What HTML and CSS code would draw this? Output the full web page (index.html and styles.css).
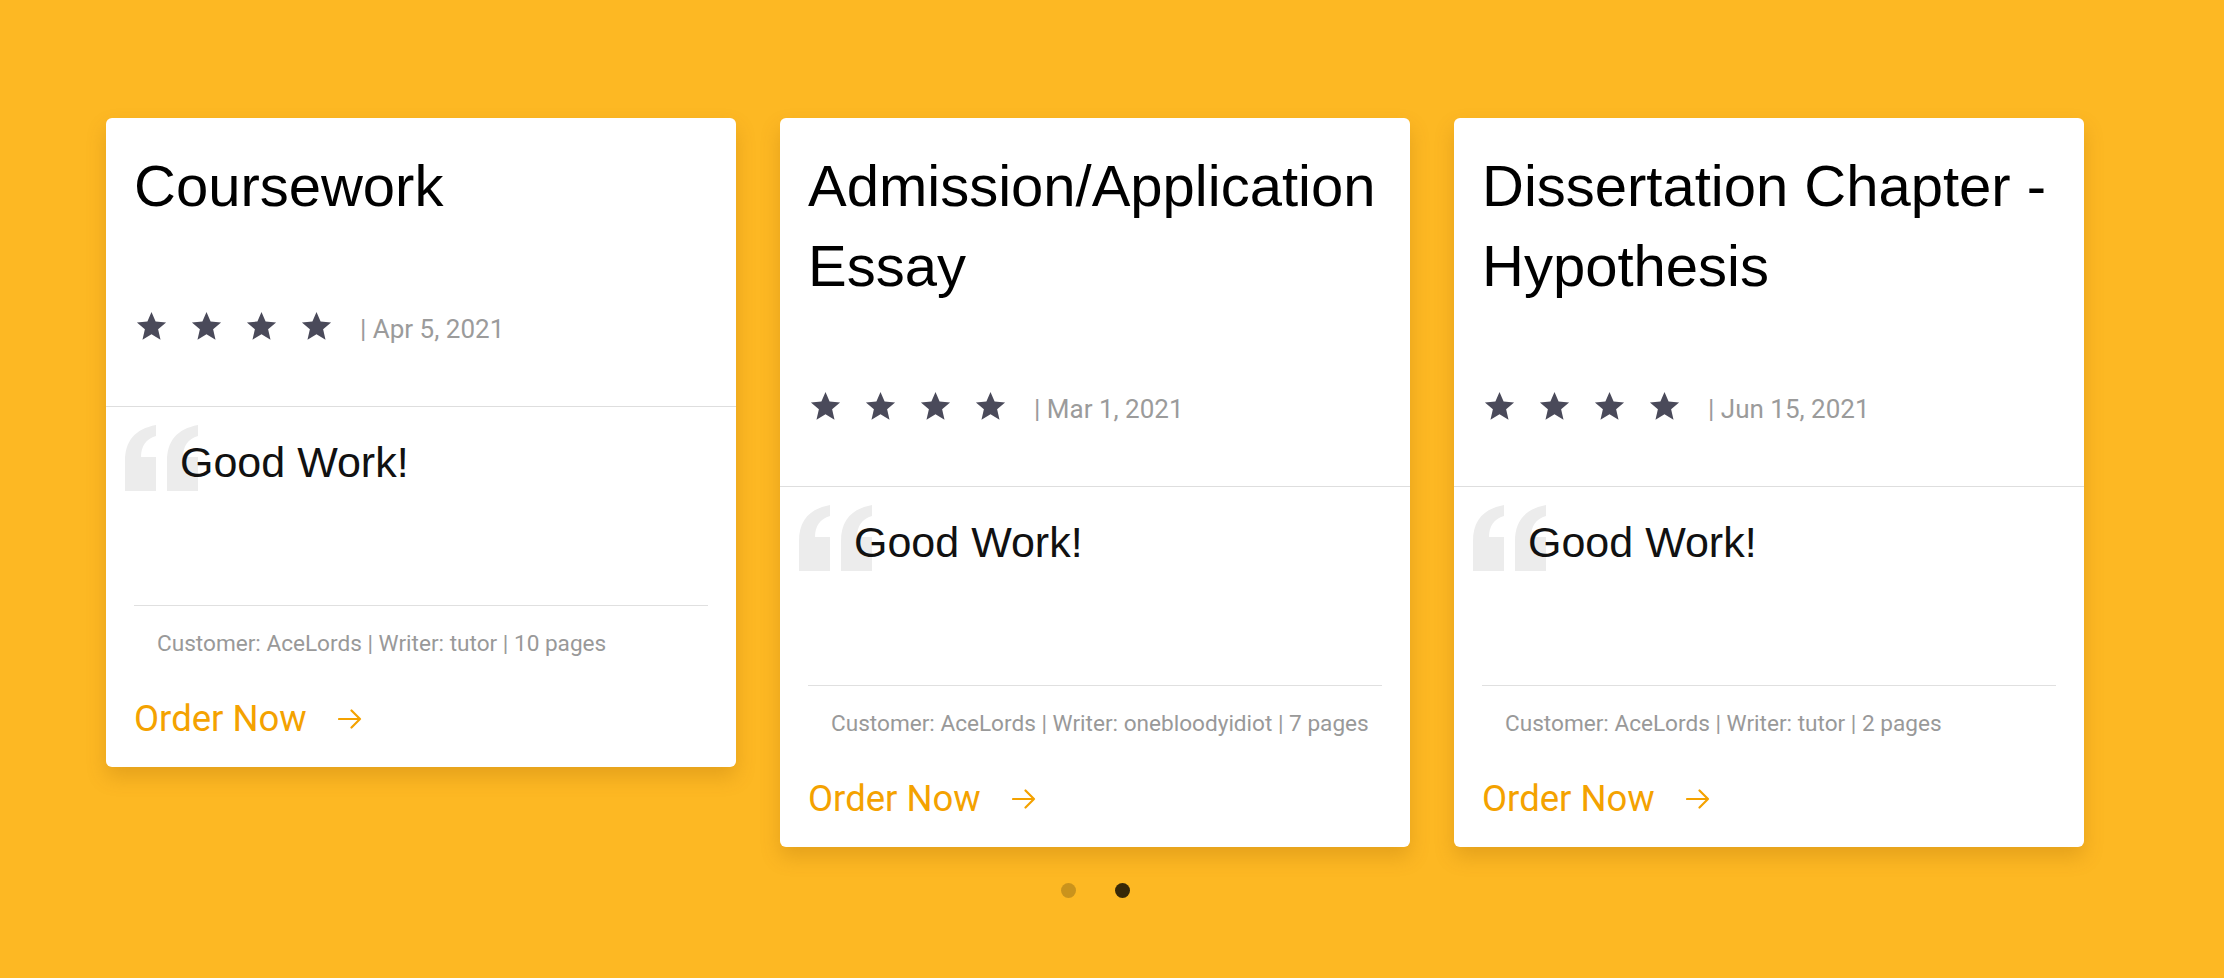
FILE: index.html
```html
<!DOCTYPE html>
<html lang="en">
<head>
<meta charset="utf-8">
<title>Reviews</title>
<link rel="stylesheet" href="styles.css">
</head>
<body>
<div class="page">
  <div class="slider">
    <div class="track">
      <article class="card">
        <div class="card-head">
          <h2 class="title">Coursework</h2>
          <div class="rating">
            <svg class="star" viewBox="0 0 24 24"><path d="M12 17.27L18.18 21l-1.64-7.03L22 9.24l-7.19-.61L12 2 9.19 8.63 2 9.24l5.46 4.73L5.82 21z"/></svg>
            <svg class="star" viewBox="0 0 24 24"><path d="M12 17.27L18.18 21l-1.64-7.03L22 9.24l-7.19-.61L12 2 9.19 8.63 2 9.24l5.46 4.73L5.82 21z"/></svg>
            <svg class="star" viewBox="0 0 24 24"><path d="M12 17.27L18.18 21l-1.64-7.03L22 9.24l-7.19-.61L12 2 9.19 8.63 2 9.24l5.46 4.73L5.82 21z"/></svg>
            <svg class="star" viewBox="0 0 24 24"><path d="M12 17.27L18.18 21l-1.64-7.03L22 9.24l-7.19-.61L12 2 9.19 8.63 2 9.24l5.46 4.73L5.82 21z"/></svg>
            <span class="date">| Apr 5, 2021</span>
          </div>
        </div>
        <div class="card-body">
          <div class="quote">
            <svg class="qmark" viewBox="0 0 74 66"><path d="M0 66V36C0 16 10 4 31 0v11c-10 3-15 10-15 21h15v34z"/><path d="M42 66V36C42 16 52 4 73 0v11c-10 3-15 10-15 21h15v34z"/></svg>
            <p class="quote-text">Good Work!</p>
          </div>
          <div class="meta">Customer: AceLords | Writer: tutor | 10 pages</div>
          <a class="order" href="#">Order Now <svg class="arrow" viewBox="0 0 24 20"><path d="M1 10h21M13.5 1.5L22 10l-8.5 8.5"/></svg></a>
        </div>
      </article>

      <article class="card">
        <div class="card-head">
          <h2 class="title">Admission/Application Essay</h2>
          <div class="rating">
            <svg class="star" viewBox="0 0 24 24"><path d="M12 17.27L18.18 21l-1.64-7.03L22 9.24l-7.19-.61L12 2 9.19 8.63 2 9.24l5.46 4.73L5.82 21z"/></svg>
            <svg class="star" viewBox="0 0 24 24"><path d="M12 17.27L18.18 21l-1.64-7.03L22 9.24l-7.19-.61L12 2 9.19 8.63 2 9.24l5.46 4.73L5.82 21z"/></svg>
            <svg class="star" viewBox="0 0 24 24"><path d="M12 17.27L18.18 21l-1.64-7.03L22 9.24l-7.19-.61L12 2 9.19 8.63 2 9.24l5.46 4.73L5.82 21z"/></svg>
            <svg class="star" viewBox="0 0 24 24"><path d="M12 17.27L18.18 21l-1.64-7.03L22 9.24l-7.19-.61L12 2 9.19 8.63 2 9.24l5.46 4.73L5.82 21z"/></svg>
            <span class="date">| Mar 1, 2021</span>
          </div>
        </div>
        <div class="card-body">
          <div class="quote">
            <svg class="qmark" viewBox="0 0 74 66"><path d="M0 66V36C0 16 10 4 31 0v11c-10 3-15 10-15 21h15v34z"/><path d="M42 66V36C42 16 52 4 73 0v11c-10 3-15 10-15 21h15v34z"/></svg>
            <p class="quote-text">Good Work!</p>
          </div>
          <div class="meta">Customer: AceLords | Writer: onebloodyidiot | 7 pages</div>
          <a class="order" href="#">Order Now <svg class="arrow" viewBox="0 0 24 20"><path d="M1 10h21M13.5 1.5L22 10l-8.5 8.5"/></svg></a>
        </div>
      </article>

      <article class="card">
        <div class="card-head">
          <h2 class="title">Dissertation Chapter - Hypothesis</h2>
          <div class="rating">
            <svg class="star" viewBox="0 0 24 24"><path d="M12 17.27L18.18 21l-1.64-7.03L22 9.24l-7.19-.61L12 2 9.19 8.63 2 9.24l5.46 4.73L5.82 21z"/></svg>
            <svg class="star" viewBox="0 0 24 24"><path d="M12 17.27L18.18 21l-1.64-7.03L22 9.24l-7.19-.61L12 2 9.19 8.63 2 9.24l5.46 4.73L5.82 21z"/></svg>
            <svg class="star" viewBox="0 0 24 24"><path d="M12 17.27L18.18 21l-1.64-7.03L22 9.24l-7.19-.61L12 2 9.19 8.63 2 9.24l5.46 4.73L5.82 21z"/></svg>
            <svg class="star" viewBox="0 0 24 24"><path d="M12 17.27L18.18 21l-1.64-7.03L22 9.24l-7.19-.61L12 2 9.19 8.63 2 9.24l5.46 4.73L5.82 21z"/></svg>
            <span class="date">| Jun 15, 2021</span>
          </div>
        </div>
        <div class="card-body">
          <div class="quote">
            <svg class="qmark" viewBox="0 0 74 66"><path d="M0 66V36C0 16 10 4 31 0v11c-10 3-15 10-15 21h15v34z"/><path d="M42 66V36C42 16 52 4 73 0v11c-10 3-15 10-15 21h15v34z"/></svg>
            <p class="quote-text">Good Work!</p>
          </div>
          <div class="meta">Customer: AceLords | Writer: tutor | 2 pages</div>
          <a class="order" href="#">Order Now <svg class="arrow" viewBox="0 0 24 20"><path d="M1 10h21M13.5 1.5L22 10l-8.5 8.5"/></svg></a>
        </div>
      </article>
    </div>
    <div class="dots">
      <span class="dot"></span>
      <span class="dot dot-active"></span>
    </div>
  </div>
</div>
</body>
</html>
```

FILE: styles.css
```css
html, body {
  margin: 0;
  padding: 0;
}

body {
  background: #fdb823;
  font-family: "Liberation Sans", Arial, sans-serif;
}

.page {
  height: 978px;
  box-sizing: border-box;
  padding: 118px 0 0 106px;
  overflow: hidden;
}

.slider {
  width: 1978px;
}

.track {
  display: flex;
  align-items: flex-start;
  gap: 44px;
}

.card {
  width: 630px;
  flex: 0 0 630px;
  background: #ffffff;
  border-radius: 6px;
  box-shadow: 0 10px 20px rgba(140, 80, 0, 0.22);
}

.card-head {
  padding: 28px 28px 60px;
  border-bottom: 1px solid #dedede;
}

.title {
  margin: 0 0 80px;
  font-family: "Liberation Sans", Arial, sans-serif;
  font-weight: 400;
  font-size: 58px;
  line-height: 80px;
  color: #000000;
}

.rating {
  display: flex;
  align-items: center;
  gap: 20px;
  height: 40px;
}

.star {
  width: 35px;
  height: 35px;
  fill: #4a4a5a;
  flex: none;
}

.date {
  margin-left: 6px;
  padding-top: 5px;
  font-family: Roboto, "Liberation Sans", sans-serif;
  font-size: 26px;
  color: #9b9b9b;
}

.card-body {
  padding: 0 28px 26px;
}

.quote {
  position: relative;
  height: 198px;
  box-sizing: border-box;
  padding: 29px 0 0 46px;
}

.qmark {
  position: absolute;
  left: -9px;
  top: 18px;
  width: 74px;
  height: 66px;
  fill: #ececec;
}

.quote-text {
  position: relative;
  margin: 0;
  font-family: "Liberation Sans", Arial, sans-serif;
  font-size: 43px;
  line-height: 52px;
  color: #111111;
}

.meta {
  border-top: 1px solid #e0e0e0;
  padding: 23px 0 0 23px;
  font-family: Roboto, "Liberation Sans", sans-serif;
  font-size: 22.6px;
  line-height: 30px;
  color: #999999;
}

.order {
  display: flex;
  align-items: center;
  gap: 31px;
  margin-top: 38px;
  font-family: Roboto, "Liberation Sans", sans-serif;
  font-size: 36.5px;
  line-height: 44px;
  color: #f4a200;
  text-decoration: none;
}

.arrow {
  width: 24px;
  height: 20px;
  fill: none;
  stroke: #f4a200;
  stroke-width: 2.2;
  stroke-linecap: round;
  stroke-linejoin: round;
}

.dots {
  display: flex;
  justify-content: center;
  gap: 39px;
  margin-top: 36px;
}

.dot {
  width: 15px;
  height: 15px;
  border-radius: 50%;
  background: rgba(0, 0, 0, 0.2);
}

.dot-active {
  background: rgba(0, 0, 0, 0.78);
}
```
